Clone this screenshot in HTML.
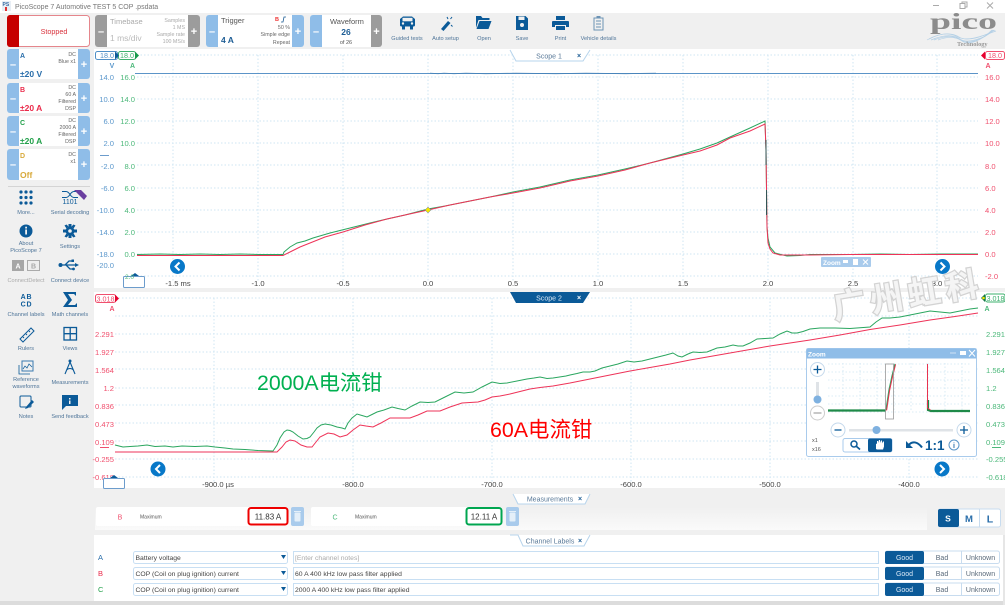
<!DOCTYPE html>
<html><head><meta charset="utf-8"><title>PicoScope 7</title>
<style>
html,body{margin:0;padding:0;background:#f0f0f0;overflow:hidden}
svg{display:block;font-family:"Liberation Sans","Noto Sans CJK SC",sans-serif}
.s{font-size:5.300px;fill:#666}
.e{text-anchor:end}.m{text-anchor:middle}
.lb{font-size:5.600px;fill:#4f7599;text-anchor:middle}
.tb{font-size:5.600px;fill:#4f7599;text-anchor:middle}
.bl{font-size:7.600px;fill:#5c98cc;text-anchor:end}
.gr{font-size:7.600px;fill:#4cb87a;text-anchor:end}
.rd{font-size:7.600px;fill:#f0506e}
.rr{font-size:7.600px;fill:#f0506e;text-anchor:end}
.gl{font-size:7.600px;fill:#4cb87a}
.xl{font-size:7.600px;fill:#444;text-anchor:middle}
.pm{font-size:11px;fill:#fff;font-weight:bold;text-anchor:middle}
.grid{stroke:#cfe6f3;stroke-width:1;stroke-dasharray:1.500 2;fill:none}
.ic{fill:#0b5a98}.ico{fill:none;stroke:#0b5a98}
.t7{font-size:6.800px;fill:#444}
</style></head><body>
<svg width="1007" height="605" viewBox="0 0 1007 605" xmlns="http://www.w3.org/2000/svg">
<!-- window -->
<rect width="1007" height="605" fill="#f0f0f0"/>
<rect width="1007" height="13" fill="#fff"/>
<rect x="2" y="1" width="9" height="10" fill="#e8eef5"/>
<text x="2.500" y="6" font-size="5px" font-weight="bold" fill="#3a6ea5">PS</text>
<rect x="5" y="7" width="2" height="4" fill="#d33"/>
<text x="15" y="9" font-size="7px" fill="#777">PicoScope 7 Automotive TEST 5 COP .psdata</text>
<path d="M933,5.500h6" stroke="#aaa" fill="none"/>
<path d="M960,3.500h5v5h-5zM962,3.500v-1.500h5v5h-2" stroke="#aaa" fill="none"/>
<path d="M987,2.500l6,6M993,2.500l-6,6" stroke="#aaa" fill="none"/>

<!-- scope backgrounds -->
<rect x="94" y="49" width="911" height="239" fill="#fff"/>
<rect x="94" y="292" width="911" height="196" fill="#fff"/>

<!-- Stopped -->
<rect x="7.500" y="15.500" width="82" height="31" rx="3" fill="#fff" stroke="#e5868c"/>
<path d="M10,15h9v32h-9a3,3 0 0 1-3-3v-26a3,3 0 0 1 3-3z" fill="#c60000"/>
<text x="54" y="34" font-size="7.200px" fill="#d8323c" text-anchor="middle">Stopped</text>

<!-- Timebase -->
<rect x="95" y="15" width="105" height="32" rx="3" fill="#fff"/>
<path d="M98,15h9v32h-9a3,3 0 0 1-3-3v-26a3,3 0 0 1 3-3z" fill="#9c9c9c"/>
<path d="M188,15h9a3,3 0 0 1 3,3v26a3,3 0 0 1-3,3h-9z" fill="#9c9c9c"/>
<text x="101" y="35" class="pm">–</text><text x="194" y="35" class="pm">+</text>
<text x="110" y="24" font-size="7.500px" fill="#aaa">Timebase</text>
<text x="110" y="41" font-size="8.500px" fill="#bbb">1 ms/div</text>
<text x="185" y="22" class="s e" style="fill:#aaa">Samples</text>
<text x="185" y="29" class="s e" style="fill:#aaa">1 MS</text>
<text x="185" y="36" class="s e" style="fill:#aaa">Sample rate</text>
<text x="185" y="43" class="s e" style="fill:#aaa">100 MS/s</text>

<!-- Trigger -->
<rect x="206" y="15" width="98" height="32" rx="3" fill="#fff"/>
<path d="M209,15h9v32h-9a3,3 0 0 1-3-3v-26a3,3 0 0 1 3-3z" fill="#8fbde8"/>
<path d="M292,15h9a3,3 0 0 1 3,3v26a3,3 0 0 1-3,3h-9z" fill="#8fbde8"/>
<text x="212" y="35" class="pm">–</text><text x="298" y="35" class="pm">+</text>
<text x="221" y="23" font-size="7.500px" fill="#555">Trigger</text>
<text x="221" y="43" font-size="8.500px" font-weight="bold" fill="#1c5c94">4 A</text>
<text x="275" y="21" font-size="5.500px" fill="#e33" font-weight="bold">B</text>
<path d="M281,22h2l1,-5h2" fill="none" stroke="#1c5c94" stroke-width=".8"/>
<text x="290" y="29" class="s e">50 %</text>
<text x="290" y="36" class="s e">Simple edge</text>
<text x="290" y="44" class="s e">Repeat</text>

<!-- Waveform -->
<rect x="310" y="15" width="72" height="32" rx="3" fill="#fff"/>
<path d="M313,15h9v32h-9a3,3 0 0 1-3-3v-26a3,3 0 0 1 3-3z" fill="#8fbde8"/>
<path d="M371,15h8a3,3 0 0 1 3,3v26a3,3 0 0 1-3,3h-8z" fill="#9c9c9c"/>
<text x="316" y="35" class="pm">–</text><text x="376.500" y="35" class="pm">+</text>
<text x="330" y="24" font-size="7.500px" fill="#555">Waveform</text>
<text x="346" y="35" font-size="8.500px" font-weight="bold" fill="#1c5c94" text-anchor="middle">26</text>
<text x="346" y="44" font-size="5.500px" fill="#555" text-anchor="middle">of 26</text>

<!-- toolbar icons -->
<path d="M400,25v-6l3,-2.500h9l3,2.500v6a1.500,1.500 0 0 1-1.500,1.500h-.5v3h-3v-3h-5v3h-3v-3h-.5a1.500,1.500 0 0 1-1.500-1.500z" class="ic"/>
<rect x="402.500" y="17.800" width="10" height="3.500" fill="#f0f0f0"/>
<circle cx="403" cy="23.500" r="1.200" fill="#f0f0f0"/><circle cx="412" cy="23.500" r="1.200" fill="#f0f0f0"/>
<path d="M441,29l7,-8l2.500,2l-7,8z" class="ic"/>
<path d="M447,17l1,2M452,17l-1.500,2M451,25l1.500,1.500" class="ico"/>
<path d="M476,16h5l1.500,2h7v2h-11l-2.500,8zM479.500,21h12l-3,8h-12z" class="ic"/>
<path d="M516,16h9.500l2.500,2.500v11.500h-12z" class="ic"/>
<rect x="518.500" y="16.500" width="6" height="3.500" fill="#f0f0f0"/>
<circle cx="522" cy="25" r="2" fill="#f0f0f0"/>
<rect x="556" y="16" width="9" height="4" class="ic"/>
<path d="M553,21h15a1,1 0 0 1 1,1v5h-3v-2h-11v2h-3v-5a1,1 0 0 1 1-1z" class="ic"/>
<rect x="556" y="26" width="9" height="4" class="ic"/>
<rect x="594" y="18" width="9" height="12" fill="none" stroke="#6c93b5"/>
<rect x="596.500" y="16" width="4" height="2.500" fill="#6c93b5"/>
<path d="M596,21h5M596,24h5M596,27h5" stroke="#6c93b5" fill="none"/>
<text x="407" y="40" class="tb">Guided tests</text>
<text x="445.500" y="40" class="tb">Auto setup</text>
<text x="484" y="40" class="tb">Open</text>
<text x="522" y="40" class="tb">Save</text>
<text x="560.500" y="40" class="tb">Print</text>
<text x="598.500" y="40" class="tb">Vehicle details</text>

<!-- logo -->
<text x="930" y="29" font-size="23px" font-weight="bold" fill="#8c8c8c" textLength="67" lengthAdjust="spacingAndGlyphs" style="font-family:'Liberation Serif',serif">pico</text>
<g fill="none" stroke="#b4d0e6" stroke-width=".7">
<path d="M927,40c12,-7 22,-8 31,-3s24,-1 38,-6"/><path d="M929,39c12,-6 22,-7 30,-2s24,0 36,-7"/><path d="M931,40c12,-5 22,-6 29,-1s24,0 34,-9"/><path d="M934,40c10,-4 20,-5 27,0s22,0 32,-10"/><path d="M938,40c8,-3 17,-4 24,1s20,-1 30,-11"/>
</g>
<text x="957" y="46" font-size="6.300px" font-weight="bold" fill="#999" style="font-family:'Liberation Serif',serif">Technology</text>

<!-- channels -->
<g>
<rect x="7" y="49" width="83" height="30" rx="3" fill="#fff"/>
<path d="M10,49h9v30h-9a3,3 0 0 1-3-3v-24a3,3 0 0 1 3-3z" fill="#8fbde8"/><path d="M78,49h9a3,3 0 0 1 3,3v24a3,3 0 0 1-3,3h-9z" fill="#8fbde8"/>
<text x="13" y="68" class="pm">–</text><text x="84" y="68" class="pm">+</text>
<text x="20" y="58" font-size="7px" font-weight="bold" fill="#2a6eaa">A</text>
<text x="20" y="77" font-size="8.500px" font-weight="bold" fill="#2a6eaa">±20 V</text>
<text x="76" y="56" class="s e">DC</text><text x="76" y="63" class="s e">Blue x1</text>
</g>
<g>
<rect x="7" y="83" width="83" height="30" rx="3" fill="#fff"/>
<path d="M10,83h9v30h-9a3,3 0 0 1-3-3v-24a3,3 0 0 1 3-3z" fill="#8fbde8"/><path d="M78,83h9a3,3 0 0 1 3,3v24a3,3 0 0 1-3,3h-9z" fill="#8fbde8"/>
<text x="13" y="102" class="pm">–</text><text x="84" y="102" class="pm">+</text>
<text x="20" y="92" font-size="7px" font-weight="bold" fill="#ea2a4a">B</text>
<text x="20" y="111" font-size="8.500px" font-weight="bold" fill="#ea2a4a">±20 A</text>
<text x="76" y="89" class="s e">DC</text><text x="76" y="96" class="s e">60 A</text><text x="76" y="103" class="s e">Filtered</text><text x="76" y="110" class="s e">DSP</text>
</g>
<g>
<rect x="7" y="116" width="83" height="30" rx="3" fill="#fff"/>
<path d="M10,116h9v30h-9a3,3 0 0 1-3-3v-24a3,3 0 0 1 3-3z" fill="#8fbde8"/><path d="M78,116h9a3,3 0 0 1 3,3v24a3,3 0 0 1-3,3h-9z" fill="#8fbde8"/>
<text x="13" y="135" class="pm">–</text><text x="84" y="135" class="pm">+</text>
<text x="20" y="125" font-size="7px" font-weight="bold" fill="#22a04a">C</text>
<text x="20" y="144" font-size="8.500px" font-weight="bold" fill="#22a04a">±20 A</text>
<text x="76" y="122" class="s e">DC</text><text x="76" y="129" class="s e">2000 A</text><text x="76" y="136" class="s e">Filtered</text><text x="76" y="143" class="s e">DSP</text>
</g>
<g>
<rect x="7" y="149" width="83" height="31" rx="3" fill="#fff"/>
<path d="M10,149h9v31h-9a3,3 0 0 1-3-3v-25a3,3 0 0 1 3-3z" fill="#8fbde8"/><path d="M78,149h9a3,3 0 0 1 3,3v25a3,3 0 0 1-3,3h-9z" fill="#8fbde8"/>
<text x="13" y="168" class="pm">–</text><text x="84" y="168" class="pm">+</text>
<text x="20" y="158" font-size="7px" font-weight="bold" fill="#d8a93a">D</text>
<text x="20" y="178" font-size="8.500px" font-weight="bold" fill="#d8a93a">Off</text>
<text x="76" y="156" class="s e">DC</text><text x="76" y="163" class="s e">x1</text>
</g>
<rect x="8" y="186" width="82" height="1" fill="#d4d4d4"/>

<!-- sidebar icons -->
<g class="ic">
<circle cx="21" cy="192" r="1.600"/><circle cx="26" cy="192" r="1.600"/><circle cx="31" cy="192" r="1.600"/>
<circle cx="21" cy="197.500" r="1.600"/><circle cx="26" cy="197.500" r="1.600"/><circle cx="31" cy="197.500" r="1.600"/>
<circle cx="21" cy="203" r="1.600"/><circle cx="26" cy="203" r="1.600"/><circle cx="31" cy="203" r="1.600"/>
<circle cx="26" cy="231" r="6.500"/>
<circle cx="70" cy="231" r="4.500"/>
<path d="M68.500,224h3v3h-3zM68.500,235h3v3h-3zM63,229.500h3v3h-3zM74,229.500h3v3h-3zM64.500,225.500l2,-1l2,2l-2,2zM75.500,225.500l-2,-1l-2,2l2,2zM64.500,236.500l2,1l2,-2l-2,-2zM75.500,236.500l-2,1l-2,-2l2,-2z"/>
<path d="M62,395h16v11h-12l-4,4z"/>
</g>
<path d="M62,191.500h4c4,0 4,6 8,6h4M62,197.500h4c4,0 4,-6 8,-6h4" class="ico"/>
<path d="M74,190h7l6,6l-3,4z" fill="#6b3fa0"/>
<text x="70" y="204" font-size="7px" fill="#0b5a98" text-anchor="middle">1101</text>
<rect x="25.200" y="229.500" width="1.800" height="5" fill="#f0f0f0"/><rect x="25.200" y="226.700" width="1.800" height="1.800" fill="#f0f0f0"/>
<circle cx="70" cy="231" r="1.800" fill="#f0f0f0"/>
<rect x="12" y="260" width="12" height="11" fill="#a6a6a6"/><text x="18" y="268.500" font-size="7px" font-weight="bold" fill="#fff" text-anchor="middle">A</text>
<rect x="27.500" y="260.500" width="12" height="10" fill="#eee" stroke="#aaa"/><text x="33.500" y="268.500" font-size="7px" font-weight="bold" fill="#a8a8a8" text-anchor="middle">B</text>
<circle cx="60.500" cy="265" r="2" class="ic"/><path d="M60,265h15M65,265l4,-4h3M66,265l4,4h3" class="ico" stroke-width="1.300"/><path d="M75,263l4,2l-4,2z" class="ic"/><rect x="71.500" y="259.500" width="2.500" height="2.500" class="ic"/><circle cx="73.500" cy="269" r="1.400" class="ic"/>
<text x="26.500" y="299" font-size="7px" font-weight="bold" fill="#0b5a98" text-anchor="middle" letter-spacing=".8">AB</text>
<text x="26.500" y="306.500" font-size="7px" font-weight="bold" fill="#0b5a98" text-anchor="middle" letter-spacing=".8">CD</text>
<path d="M63,292h13v4l-2,-2h-6l4,6l-4,5h7l2,-2v4h-14l5,-7z" class="ic"/>
<path d="M20,339l11,-11l3,3l-11,11z M23,337l1,1M26,334l1,1M29,331l1,1" class="ico" stroke-width="1"/>
<rect x="64" y="327.500" width="12.500" height="12.500" fill="none" stroke="#0b5a98" stroke-width="1.300"/><path d="M70.200,327.500v12.500M64,333.700h12.500" class="ico" stroke-width="1.300"/>
<rect x="22" y="361" width="11" height="10" fill="none" stroke="#3a7ab0"/><path d="M19,365v9h11" class="ico" stroke-width=".8"/><path d="M23,369l2,-3l2,2l2,-4l3,3" class="ico" stroke-width=".7"/>
<circle cx="70" cy="361" r="1.500" class="ic"/><path d="M70,362l-5,12M70,362l5,12M66.500,370c2,-2 5,-2 7,0" class="ico" stroke-width="1.100"/>
<rect x="20" y="396" width="11" height="11" rx="1" fill="none" stroke="#0b5a98"/><path d="M26,407l6,-7l2,2l-6,6l-3,1z" class="ic"/>
<rect x="69" y="398" width="1.500" height="1.500" fill="#f0f0f0"/><rect x="69" y="400.500" width="1.500" height="3.500" fill="#f0f0f0"/>

<text x="26" y="214" class="lb">More...</text>
<text x="70" y="214" class="lb">Serial decoding</text>
<text x="26" y="245" class="lb">About</text><text x="26" y="252" class="lb">PicoScope 7</text>
<text x="70" y="248" class="lb">Settings</text>
<text x="26" y="282" class="lb" style="fill:#aaa">ConnectDetect</text>
<text x="70" y="282" class="lb">Connect device</text>
<text x="26" y="316" class="lb">Channel labels</text>
<text x="70" y="316" class="lb">Math channels</text>
<text x="26" y="350" class="lb">Rulers</text>
<text x="70" y="350" class="lb">Views</text>
<text x="26" y="381" class="lb">Reference</text><text x="26" y="388" class="lb">waveforms</text>
<text x="70" y="384" class="lb">Measurements</text>
<text x="26" y="418" class="lb">Notes</text>
<text x="70" y="418" class="lb">Send feedback</text>

<!-- SCOPE 1 grid -->
<path class="grid" d="M137,55H978M137,77H978M137,99H978M137,121H978M137,143H978M137,165H978M137,188H978M137,210H978M137,232H978M137,254H978M137,276H978"/>
<path class="grid" d="M173,55V282M258,55V282M343,55V282M428,55V282M513,55V282M598,55V282M683,55V282M768,55V282M853,55V282M937,55V282"/>

<!-- scope1 tab -->
<path d="M510,50L516,61H583L590,50" fill="#fff" stroke="#b7d4ec"/>
<text x="549" y="58.500" font-size="7px" fill="#5a7a99" text-anchor="middle">Scope 1</text>
<text x="579" y="58" font-size="7px" font-weight="bold" fill="#1c5c94" text-anchor="middle">×</text>

<!-- scope1 chips -->
<rect x="95.500" y="51.500" width="22" height="8" rx="2" fill="#fff" stroke="#4f8fc6"/>
<text x="107" y="58" font-size="7.200px" fill="#4f8fc6" text-anchor="middle">18.0</text>
<rect x="118.500" y="51.500" width="17" height="8" rx="2" fill="#fff" stroke="#3eb06e"/>
<text x="127" y="58" font-size="7.200px" fill="#3eb06e" text-anchor="middle">18.0</text>
<path d="M115,51.500l4,4l-4,4z" fill="#0b5a98"/><path d="M135,51.500l4,4l-4,4z" fill="#16994a"/>
<text x="112" y="68" font-size="7px" font-weight="bold" fill="#5c98cc" text-anchor="middle">V</text>
<text x="132.500" y="68" font-size="7px" font-weight="bold" fill="#4cb87a" text-anchor="middle">A</text>
<rect x="985.500" y="51.500" width="19" height="8" rx="2" fill="#fff" stroke="#f0506e"/>
<text x="995" y="58" font-size="7.200px" fill="#f0506e" text-anchor="middle">18.0</text>
<path d="M985,51.500l-4,4l4,4z" fill="#e6002e"/>
<text x="988" y="68" font-size="7px" font-weight="bold" fill="#f0506e" text-anchor="middle">A</text>

<!-- scope1 axis labels -->
<g>
<text x="114" y="80" class="bl">14.0</text><text x="114" y="102" class="bl">10.0</text><text x="114" y="124" class="bl">6.0</text><text x="114" y="146" class="bl">2.0</text><text x="114" y="169" class="bl">-2.0</text><text x="114" y="191" class="bl">-6.0</text><text x="114" y="213" class="bl">-10.0</text><text x="114" y="235" class="bl">-14.0</text><text x="114" y="257" class="bl">-18.0</text><text x="114" y="268" class="bl">-20.0</text>
<text x="135" y="80" class="gr">16.0</text><text x="135" y="102" class="gr">14.0</text><text x="135" y="124" class="gr">12.0</text><text x="135" y="146" class="gr">10.0</text><text x="135" y="169" class="gr">8.0</text><text x="135" y="191" class="gr">6.0</text><text x="135" y="213" class="gr">4.0</text><text x="135" y="235" class="gr">2.0</text><text x="135" y="257" class="gr">0.0</text>
<text x="985" y="80" class="rd">16.0</text><text x="985" y="102" class="rd">14.0</text><text x="985" y="124" class="rd">12.0</text><text x="985" y="146" class="rd">10.0</text><text x="985" y="169" class="rd">8.0</text><text x="985" y="191" class="rd">6.0</text><text x="985" y="213" class="rd">4.0</text><text x="985" y="235" class="rd">2.0</text><text x="985" y="257" class="rd">0.0</text><text x="985" y="279" class="rd">-2.0</text>
</g>
<rect x="100" y="155" width="9" height="1" fill="#6c9ccc"/>
<g>
<text x="178" y="286" class="xl">-1.5 ms</text><text x="258" y="286" class="xl">-1.0</text><text x="343" y="286" class="xl">-0.5</text><text x="428" y="286" class="xl">0.0</text><text x="513" y="286" class="xl">0.5</text><text x="598" y="286" class="xl">1.0</text><text x="683" y="286" class="xl">1.5</text><text x="768" y="286" class="xl">2.0</text><text x="853" y="286" class="xl">2.5</text><text x="937" y="286" class="xl">3.0</text>
</g>

<!-- scope1 traces -->
<path d="M135,73.500H978" stroke="#5b94c8" stroke-width="1" fill="none"/>
<path d="M430,73l8,.8l6,-.8l10,.8l12,-.8l20,.8l30,-.8l40,.8l30,-.8l40,.8l30,-.8" stroke="#2f6fa8" stroke-width=".8" fill="none" opacity=".5"/>
<polyline fill="none" stroke="#2aa65f" stroke-width="1" points="137,254.500 160,254 180,254.500 200,254 220,254.500 240,254 260,254.500 283,254.500 284,252 290,247 297,243 305,241 313,238 330,233 350,228 370,223 387,219 405,215 428,209 445,206 470,201 490,197 513,192 540,187 570,180 598,175 625,169 650,163 683,154 700,149 717,143 730,137 750,128 765,121 766,150 766.500,190 767,227 768,238 770,247 775,253 787,256 800,255.500 810,254.500 850,254.500 880,254 910,254.500 940,254 978,254"/>
<polyline fill="none" stroke="#ee3358" stroke-width="1" points="137,255.500 200,255.500 283,255.500 290,252 300,247 310,243 325,237 343,232 365,225 387,219 405,215 428,210 450,205 470,201 490,197 513,193 540,188 570,181 598,176 625,170 650,163 683,155 700,151 717,145 730,138 750,131 765,124 766,150 767,227 768,243 770,249 773,253 780,255 810,255 850,254.500 978,254.500"/>
<path d="M766,140V165M766.500,190V215" stroke="#355" stroke-width="1" fill="none"/>
<path d="M428,207l3,3l-3,3l-3,-3z" fill="#f2e400" stroke="#6a7ac0" stroke-width=".5"/>

<!-- scope1 nav -->
<circle cx="177.500" cy="266.500" r="7.500" fill="#0878c8"/><path d="M179.500,262.500l-4,4l4,4" fill="none" stroke="#fff" stroke-width="2"/>
<circle cx="942.500" cy="266.500" r="7.500" fill="#0878c8"/><path d="M940.500,262.500l4,4l-4,4" fill="none" stroke="#fff" stroke-width="2"/>
<rect x="821" y="257" width="50" height="10" rx="1" fill="#a9cbec"/>
<text x="823" y="265" font-size="6.500px" font-weight="bold" fill="#fff">Zoom</text>
<rect x="843" y="260" width="5" height="3" fill="#fff"/><rect x="853" y="259" width="5" height="6" fill="#fff"/><path d="M863,259.500l5,5M868,259.500l-5,5" stroke="#fff"/>
<rect x="123.500" y="276.500" width="21" height="11" rx="1" fill="#fff" stroke="#6c9ccc"/>
<path d="M131,276l4,-3l4,3z" fill="#0b5a98"/>
<text x="125" y="279" font-size="6.500px" fill="#4cb87a">2.0</text>

<!-- SCOPE 2 -->
<path class="grid" d="M115,298H978M115,316H978M115,334H978M115,352H978M115,369H978M115,388H978M115,405H978M115,423H978M115,441H978M115,459H978M115,477H978"/>
<path class="grid" d="M214,298V482M353,298V482M492,298V482M631,298V482M770,298V482M909,298V482"/>
<path d="M510,292L516,303H583L590,292Z" fill="#0b5a98"/>
<text x="549" y="300.500" font-size="7px" fill="#dbe9f6" text-anchor="middle">Scope 2</text>
<text x="579" y="300" font-size="7px" font-weight="bold" fill="#fff" text-anchor="middle">×</text>
<rect x="95.500" y="294.500" width="20" height="8" rx="2" fill="#fff" stroke="#f0506e"/>
<text x="105.500" y="301.500" font-size="7.200px" fill="#f0506e" text-anchor="middle">3.018</text>
<path d="M115,294.500l4,4l-4,4z" fill="#e6002e"/>
<text x="112" y="311" font-size="7px" fill="#f0506e" text-anchor="middle" font-weight="bold">A</text>
<g>
<text x="114" y="337" class="rr">2.291</text><text x="114" y="355" class="rr">1.927</text><text x="114" y="373" class="rr">1.564</text><text x="114" y="391" class="rr">1.2</text><text x="114" y="409" class="rr">0.836</text><text x="114" y="427" class="rr">0.473</text><text x="114" y="445" class="rr">0.109</text><text x="114" y="462" class="rr">-0.255</text><text x="114" y="480" class="rr">-0.618</text>
<text x="986" y="337" class="gl">2.291</text><text x="986" y="355" class="gl">1.927</text><text x="986" y="373" class="gl">1.564</text><text x="986" y="391" class="gl">1.2</text><text x="986" y="409" class="gl">0.836</text><text x="986" y="427" class="gl">0.473</text><text x="986" y="445" class="gl">0.109</text><text x="986" y="462" class="gl">-0.255</text><text x="986" y="480" class="gl">-0.618</text>
</g>
<rect x="100" y="447" width="9" height="1" fill="#f0506e"/>
<rect x="992" y="447" width="9" height="1" fill="#4cb87a"/>
<g>
<text x="218" y="487" class="xl">-900.0 µs</text><text x="353" y="487" class="xl">-800.0</text><text x="492" y="487" class="xl">-700.0</text><text x="631" y="487" class="xl">-600.0</text><text x="770" y="487" class="xl">-500.0</text><text x="909" y="487" class="xl">-400.0</text>
</g>
<!-- scope 2 traces -->
<polyline fill="none" stroke="#2aa65f" stroke-width="1" points="115,445 119,446 123,447 130,446.500 138,446 147,445 155,446.500 165,446 173,447 182,446 195,446.500 207,446 215,447 225,448 233,449 245,449.500 258,450.500 273,451 277,445 280,438 284,432 287,430 290,430.500 293,432 298,436 303,439 307,438.500 310,437 314,432 317,428 321,425 325,424 331,425 337,427 342,428 345,429 348,423 352,418 357,414 362,415.500 367,417 372,414.500 377,412 384,410 392,407 398,408.500 405,410 412,406 420,402 428,402.500 435,402 445,397 455,392 464,393 473,392 482,387 492,382 500,383.500 507,383 517,381 527,379 534,378 540,377 547,378.500 553,378 566,376 570,375 577,373.500 583,372 590,372 595,371 602,368 610,366 618,364 627,361 634,362 642,361 650,359 658,357 666,355 673,353 678,356 682,357 688,354 693,352 700,352.500 707,352 712,350 717,348 725,347 733,345 738,346 743,346 750,343 757,339 765,338.500 773,338 780,334 787,331 792,333 797,333 803,331.500 810,329 820,328 835,328 850,328.500 870,327 876,322 882,318 890,318 900,317 915,314 930,311 940,312 950,313 960,311 970,309 978,308"/>
<polyline fill="none" stroke="#ee3358" stroke-width="1" points="115,452 180,452 277,452 282,447 286,442 290,440 295,441 301,445 307,447 312,447 316,442 320,437 328,433 334,434 340,437 347,435 353,430 360,425 366,426 373,427 381,423 390,418 400,418 410,418 418,415 427,411 433,411 440,411 450,407 462,403 470,402.500 478,402 485,400 492,397 500,396 510,394 520,391.500 530,389 540,387.500 553,386 570,383 590,379 610,375 630,371 650,367.500 670,364 690,360 710,356.500 730,353 750,349.500 770,346 790,343 810,340 840,335 870,329.500 900,325 930,320 955,316.500 978,313"/>

<!-- right chip -->
<rect x="985.500" y="294" width="19.500" height="8" rx="2" fill="#fff" stroke="#3eb06e"/>
<text x="995.500" y="301" font-size="7.200px" fill="#3eb06e" text-anchor="middle">3.018</text>
<path d="M985,294l-4,4l4,4z" fill="#16704a"/><circle cx="983.500" cy="298" r="1.300" fill="#f2e400"/>
<text x="987" y="311" font-size="7px" fill="#4cb87a" text-anchor="middle" font-weight="bold">A</text>

<!-- annotations -->
<text x="257" y="390" font-size="21.300px" fill="#00b050">2000A电流钳</text>
<text x="490" y="437" font-size="21.400px" fill="#ff0000">60A电流钳</text>

<!-- scope2 nav -->
<circle cx="158" cy="469" r="7.500" fill="#0878c8"/><path d="M160,465l-4,4l4,4" fill="none" stroke="#fff" stroke-width="2"/>
<circle cx="942" cy="469" r="7.500" fill="#0878c8"/><path d="M940,465l4,4l-4,4" fill="none" stroke="#fff" stroke-width="2"/>
<rect x="103.500" y="478.500" width="21" height="10" rx="1" fill="#fff" stroke="#6c9ccc"/>
<path d="M110,478l4,-3l4,3z" fill="#0b5a98"/>

<!-- Zoom window -->
<rect x="806.500" y="348.500" width="170" height="108" rx="2" fill="#fff" stroke="#a9cbec"/>
<rect x="806.500" y="348.500" width="170" height="10" fill="#8fbde8"/>
<text x="808" y="356.500" font-size="6.500px" font-weight="bold" fill="#fff">Zoom</text>
<rect x="950" y="352.500" width="6" height="1" fill="#cfe1f3"/><rect x="960" y="351" width="6" height="4" fill="#fff"/><path d="M969,350l6,6.500M975,350l-6,6.500" stroke="#fff"/>
<circle cx="817.500" cy="369.500" r="7" fill="#fff" stroke="#c5d9ec"/><path d="M813.500,369.500h8M817.500,365.500v8" stroke="#0b5a98" stroke-width="1.300"/>
<rect x="816" y="382" width="3" height="20" fill="#dfe3e7"/><circle cx="817.500" cy="399.500" r="4" fill="#7fb1e0"/>
<circle cx="817.500" cy="413" r="7" fill="#fff" stroke="#ccc"/><path d="M813.500,413h8" stroke="#aaa" stroke-width="1.300"/>
<path class="grid" d="M828,364H971M828,372H971M828,380H971M828,388H971M828,396H971M828,404H971M828,412H971M843,363V412M860,363V412M877,363V412M894,363V412M911,363V412M928,363V412M945,363V412M962,363V412" style="stroke-width:.8"/>
<path d="M828,410.500h58" stroke="#1f8a48" stroke-width="2.200" fill="none"/>
<path d="M928,400v10l3,1h39" stroke="#1f8a48" stroke-width="2.200" fill="none"/>
<path d="M886,410l3,-20l3,-14l3,-12" stroke="#2aa65f" stroke-width="1.200" fill="none"/>
<path d="M886,410l3,-20l3,-14l3,-12" stroke="#e8324f" stroke-width="1" fill="none" transform="translate(.6,.4)"/>
<path d="M927.500,364V408l3,2" stroke="#e8324f" fill="none"/>
<rect x="885.500" y="364" width="8" height="55" fill="none" stroke="#999" stroke-width=".8"/>
<circle cx="838" cy="430" r="7" fill="#fff" stroke="#c5d9ec"/><path d="M834.500,430h7" stroke="#0b5a98" stroke-width="1.300"/>
<rect x="849" y="429" width="104" height="2.500" fill="#dfe3e7"/><circle cx="876.500" cy="430" r="4" fill="#7fb1e0"/>
<circle cx="964" cy="430" r="7" fill="#fff" stroke="#c5d9ec"/><path d="M960,430h8M964,426v8" stroke="#0b5a98" stroke-width="1.300"/>
<text x="812" y="442" font-size="5.500px" fill="#555">x1</text><text x="812" y="451" font-size="5.500px" fill="#555">x16</text>
<rect x="843" y="438.500" width="49" height="13.500" rx="2" fill="#fff" stroke="#a9cbec"/>
<rect x="868" y="438.500" width="24" height="13.500" rx="2" fill="#0b5a98"/>
<circle cx="854" cy="444" r="3" fill="none" stroke="#0b5a98" stroke-width="1.500"/><path d="M856,446l4,3.500" stroke="#0b5a98" stroke-width="1.700"/>
<path d="M876,449v-5l1,-.5v-2.500h1v2l1,-3h1v3l1,-2.500h1v3l1,-2h1v5l-1,3h-6z" fill="#fff"/>
<path d="M908,446c4,-6 10,-4 14,1.500" fill="none" stroke="#0b5a98" stroke-width="2"/><path d="M906,441v7h7z" fill="#0b5a98"/>
<text x="925" y="450" font-size="13.500px" font-weight="bold" fill="#0b5a98">1:1</text>
<circle cx="954" cy="445" r="5" fill="#fff" stroke="#5a95c8"/><text x="954" y="448" font-size="7px" fill="#2a6eaa" text-anchor="middle" font-weight="bold">i</text>

<!-- Watermark -->
<g transform="rotate(-9.500 835 320)" opacity=".9">
<text x="835" y="319" font-size="33px" font-weight="bold" fill="#f4f4f4" stroke="#cfcfcf" stroke-width="2.500" paint-order="stroke" letter-spacing="5" style="font-family:'Noto Sans CJK SC',sans-serif">广州虹科</text>
</g>

<!-- Measurements -->
<path d="M513,494L518,504H585L590,494" fill="#fff" stroke="#b7d4ec"/>
<text x="550" y="501.500" font-size="7px" fill="#5a7a99" text-anchor="middle">Measurements</text>
<text x="580" y="501" font-size="7px" font-weight="bold" fill="#1c5c94" text-anchor="middle">×</text>
<defs><linearGradient id="fd" x1="0" x2="0" y1="0" y2="1"><stop offset="0" stop-color="#f0f0f0"/><stop offset="1" stop-color="#fafafa"/></linearGradient></defs>
<rect x="95" y="507" width="832" height="23" fill="url(#fd)"/>
<rect x="96" y="507" width="192" height="19" rx="2" fill="#fff"/>
<rect x="311" y="507" width="191" height="19" rx="2" fill="#fff"/>
<text x="120" y="519.500" font-size="7px" fill="#f0506e" text-anchor="middle">B</text>
<text x="140" y="518.500" font-size="5px" fill="#555">Maximum</text>
<rect x="248.500" y="508" width="39" height="16.500" rx="2.500" fill="#fff" stroke="#ee0000" stroke-width="2"/>
<text x="268" y="519.500" font-size="8px" fill="#333" text-anchor="middle">11.83 A</text>
<path d="M293,507h9a2,2 0 0 1 2,2v15a2,2 0 0 1-2,2h-9a2,2 0 0 1-2,-2v-15a2,2 0 0 1 2,-2z" fill="#a9cbec"/>
<rect x="294.500" y="512.500" width="6" height="9" rx="1" fill="#e4eff9"/><rect x="294" y="511" width="7" height="1" fill="#e4eff9"/>
<text x="335" y="519.500" font-size="7px" fill="#4cb87a" text-anchor="middle">C</text>
<text x="355" y="518.500" font-size="5px" fill="#555">Maximum</text>
<rect x="466.500" y="508" width="35" height="16.500" rx="2.500" fill="#fff" stroke="#00a650" stroke-width="2"/>
<text x="484" y="519.500" font-size="8px" fill="#333" text-anchor="middle">12.11 A</text>
<path d="M508,507h9a2,2 0 0 1 2,2v15a2,2 0 0 1-2,2h-9a2,2 0 0 1-2,-2v-15a2,2 0 0 1 2,-2z" fill="#a9cbec"/>
<rect x="509.500" y="512.500" width="6" height="9" rx="1" fill="#e4eff9"/><rect x="509" y="511" width="7" height="1" fill="#e4eff9"/>

<!-- S M L -->
<rect x="938.500" y="509" width="62" height="18" rx="2" fill="#fff" stroke="#c8dcef"/>
<rect x="938" y="509" width="21" height="18" rx="2" fill="#0b5a98"/>
<path d="M979.500,509v18" stroke="#c8dcef"/>
<text x="948" y="521.500" font-size="8.500px" font-weight="bold" fill="#fff" text-anchor="middle">S</text>
<text x="969" y="522" font-size="9.500px" font-weight="bold" fill="#2a6eaa" text-anchor="middle">M</text>
<text x="990" y="522.500" font-size="10.500px" font-weight="bold" fill="#2a6eaa" text-anchor="middle">L</text>

<!-- Channel labels panel -->
<rect x="94" y="535" width="909" height="66" fill="#fff"/>
<rect x="0" y="601" width="1005" height="4" fill="#dcdcdc"/>
<rect x="1003" y="535" width="2" height="70" fill="#e6e6e6"/>
<rect x="1005" y="13" width="2" height="592" fill="#fff"/>
<path d="M510,535H518L523,546H584L590,535" fill="#fff" stroke="#b7d4ec"/>
<text x="550" y="543.500" font-size="7px" fill="#5a7a99" text-anchor="middle">Channel Labels</text>
<text x="580" y="543" font-size="7px" font-weight="bold" fill="#1c5c94" text-anchor="middle">×</text>

<text x="98" y="560" font-size="7.500px" fill="#2a6eaa">A</text>
<text x="98" y="576" font-size="7.500px" fill="#ea2a4a">B</text>
<text x="98" y="592" font-size="7.500px" fill="#22a04a">C</text>
<g fill="#fff" stroke="#c8dff3">
<rect x="133.500" y="551.500" width="154" height="12" rx="2"/><rect x="133.500" y="567.500" width="154" height="12" rx="2"/><rect x="133.500" y="583.500" width="154" height="12" rx="2"/>
<rect x="293.500" y="551.500" width="585" height="12"/><rect x="293.500" y="567.500" width="585" height="12"/><rect x="293.500" y="583.500" width="585" height="12"/>
</g>
<text x="135.500" y="560" class="t7">Battery voltage</text>
<text x="135.500" y="576" class="t7">COP (Coil on plug ignition) current</text>
<text x="135.500" y="592" class="t7">COP (Coil on plug ignition) current</text>
<path d="M281,555h5l-2.500,4zM281,571h5l-2.500,4zM281,587h5l-2.500,4z" fill="#0b5a98"/>
<text x="295" y="560" class="t7" style="fill:#aaa">[Enter channel notes]</text>
<text x="295" y="576" class="t7">60 A 400 kHz low pass filter applied</text>
<text x="295" y="592" class="t7">2000 A 400 kHz low pass filter applied</text>

<g fill="#fff" stroke="#c8dcef">
<rect x="885.500" y="551" width="114" height="12.500" rx="2"/><rect x="885.500" y="567" width="114" height="12.500" rx="2"/><rect x="885.500" y="583" width="114" height="12.500" rx="2"/>
<path d="M961.500,551v12.500M961.500,567v12.500M961.500,583v12.500" fill="none"/>
</g>
<rect x="885" y="551" width="39" height="13" rx="2" fill="#0b5a98"/><rect x="885" y="567" width="39" height="13" rx="2" fill="#0b5a98"/><rect x="885" y="583" width="39" height="13" rx="2" fill="#0b5a98"/>
<g font-size="7px" text-anchor="middle">
<text x="904.500" y="560" fill="#dbe9f6">Good</text><text x="904.500" y="576" fill="#dbe9f6">Good</text><text x="904.500" y="592" fill="#dbe9f6">Good</text>
<text x="942" y="560" fill="#5a6a7a">Bad</text><text x="942" y="576" fill="#5a6a7a">Bad</text><text x="942" y="592" fill="#5a6a7a">Bad</text>
<text x="980.500" y="560" fill="#5a6a7a">Unknown</text><text x="980.500" y="576" fill="#5a6a7a">Unknown</text><text x="980.500" y="592" fill="#5a6a7a">Unknown</text>
</g>
</svg>
</body></html>
